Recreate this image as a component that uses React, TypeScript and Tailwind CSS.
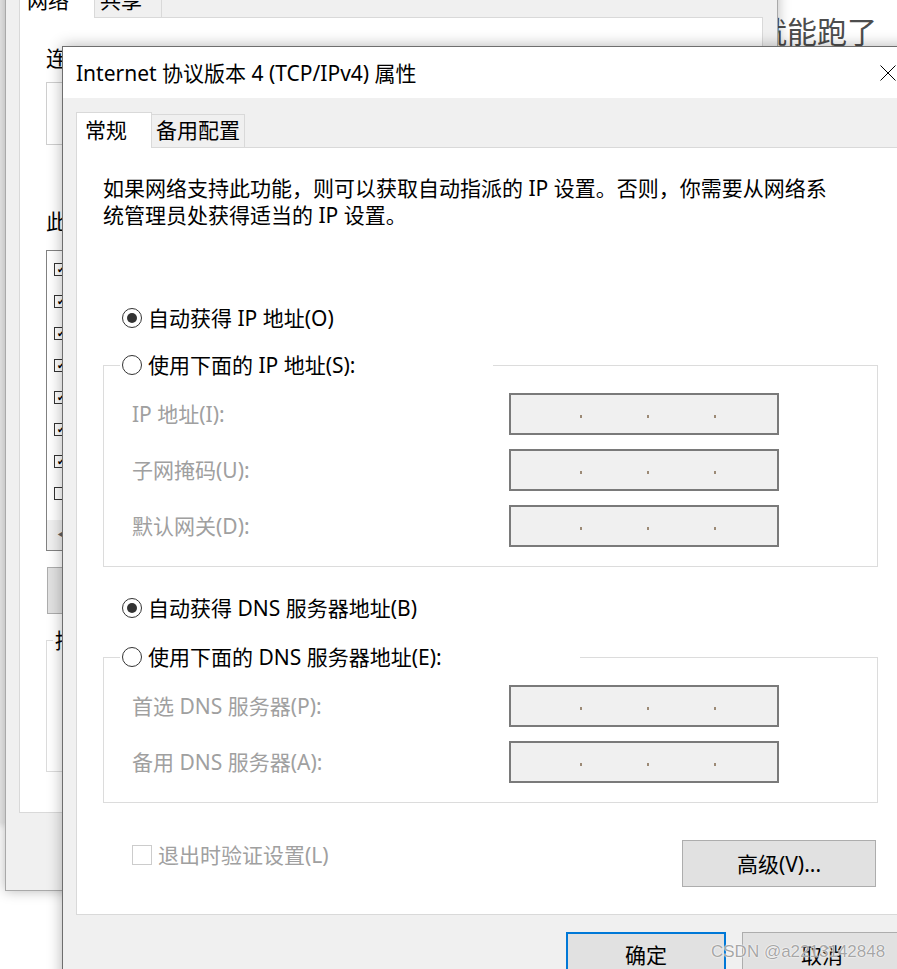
import React from "react";

const ui = "[font-family:'Noto_Sans','Noto_Sans_CJK_SC',sans-serif]";

function Radio({ checked = false }: { checked?: boolean }) {
  return (
    <span className="w-[20px] h-[20px] shrink-0 rounded-full border border-[#333] bg-white flex items-center justify-center">
      {checked && <span className="w-[10px] h-[10px] rounded-full bg-[#333]" />}
    </span>
  );
}

function IpBox() {
  return (
    <div className="w-[270px] h-[42px] border-2 border-[#7a7a7a] bg-[#f0f0f0] flex items-center pl-[69px] gap-[65px]">
      <span className="w-[2px] h-[3px] mt-[4px] bg-[#9c8a76]" />
      <span className="w-[2px] h-[3px] mt-[4px] bg-[#9c8a76]" />
      <span className="w-[2px] h-[3px] mt-[4px] bg-[#9c8a76]" />
    </div>
  );
}

function GroupBox({ title, width, mt, rows }: { title: string; width: string; mt: string; rows: string[] }) {
  return (
    <fieldset className={`border border-[#dcdcdc] pl-[16px] pt-[14px] pb-[19px] ${mt}`}>
      <legend className={`${width} h-[28px] p-0`}>
        <div className="flex items-center h-[28px] pl-[2px] gap-[6px] bg-white">
          <Radio />
          <span className="whitespace-nowrap">{title}</span>
        </div>
      </legend>
      <div className="grid grid-cols-[377px_270px] gap-y-[14px] items-center ml-[12px]">
        {rows.map((r) => (
          <React.Fragment key={r}>
            <span className="text-[#a0a0a0] whitespace-nowrap">{r}</span>
            <IpBox />
          </React.Fragment>
        ))}
      </div>
    </fieldset>
  );
}

function BackWindow() {
  const items = [
    "Microsoft 网络客户端",
    "VMware Bridge Protocol",
    "Microsoft 网络的文件和打印机共享",
    "Npcap Packet Driver (NPCAP)",
    "QoS 数据包计划程序",
    "Internet 协议版本 4 (TCP/IPv4)",
    "Microsoft 网络适配器多路传送器协议",
    "Microsoft LLDP 协议驱动程序",
  ];
  return (
    <div className="absolute left-[5px] top-[-40px] w-[773px] h-[931px] bg-[#f0f0f0] border border-[#a9a9a9] shadow-[0_0_12px_rgba(0,0,0,0.28)] px-[13px] pt-[21px] text-[21px] leading-[28px]">
      {/* tabs */}
      <div className="flex items-end h-[35px]">
        <div className="w-[76px] h-[36px] -mb-px relative z-10 bg-white border border-b-0 border-[#d9d9d9] pl-[7px] pt-[3px]">网络</div>
        <div className="w-[68px] h-[33px] -ml-px border border-b-0 border-[#d9d9d9] pl-[5px] pt-[1px]">共享</div>
      </div>
      <div className="h-[796px] w-[744px] bg-white border border-[#d9d9d9] pl-[26px] pr-[26px] pt-[26px]">
        <div>连接时使用:</div>
        <div className="mt-[10px] h-[63px] border border-[#cfcfcf] bg-white" />
        <div className="mt-[62px]">此连接使用下列项目(O):</div>
        <div className="mt-[15px] h-[301px] border border-[#828282] flex flex-col">
          <div className="flex-1 pt-[11px] pl-[7px]">
            {items.map((it, i) => (
              <div key={it} className="h-[32px] flex items-start gap-[8px]">
                <span className="w-[13px] h-[13px] mt-[1px] border border-[#333] bg-white text-[10px] leading-[11px] text-center">
                  {i < 7 ? "✔" : ""}
                </span>
                <span className="text-[18px] leading-[16px]">{it}</span>
              </div>
            ))}
          </div>
          <div className="h-[30px] bg-[#f0f0f0] flex items-center pl-[10px] text-[#606060] text-[12px]">◀</div>
        </div>
        <div className="mt-[16px] ml-px w-[150px] h-[47px] bg-[#e1e1e1] border border-[#adadad] flex items-center justify-center">安装(N)...</div>
        <fieldset className="mt-[12px] h-[146px] border border-[#dcdcdc] pl-[6px]">
          <legend className="px-[2px]">描述</legend>
        </fieldset>
      </div>
    </div>
  );
}

export default function App() {
  return (
    <div className={`relative w-[897px] h-[969px] overflow-hidden bg-white ${ui}`}>
      {/* blog page behind the windows */}
      <div className="absolute left-[757px] top-[16px] text-[30px] leading-[32px] text-[#4d4d4d] whitespace-nowrap">就能跑了</div>
      <div className="absolute left-0 top-0 w-[5px] h-[823px] bg-[#ebebeb] shadow-[0_2px_6px_rgba(0,0,0,0.2)]" />

      <BackWindow />

      {/* TCP/IPv4 properties dialog */}
      <div className="absolute left-[62px] top-[46px] w-[856px] h-[940px] border-l border-t border-[#6e6e6e] bg-[#f0f0f0] shadow-[0_0_14px_rgba(0,0,0,0.3)] text-[21px] leading-[28px] text-black">
        <div className="h-[51px] bg-white flex items-center justify-between pl-[13px] pr-[22px]">
          <span className="whitespace-nowrap">Internet 协议版本 4 (TCP/IPv4) 属性</span>
          <svg width="16" height="16" viewBox="0 0 16 16">
            <path d="M0.5 0.5 L15.5 15.5 M15.5 0.5 L0.5 15.5" stroke="#000" strokeWidth="1" fill="none" />
          </svg>
        </div>

        <div className="px-[13px] pt-[14px]">
          <div className="flex items-end h-[35px]">
            <div className="w-[76px] h-[36px] -mb-px relative z-10 bg-white border border-b-0 border-[#d9d9d9] pl-[8px] pt-[3px]">常规</div>
            <div className="w-[94px] h-[33px] -ml-px border border-b-0 border-[#d9d9d9] pl-[4px] pt-px">备用配置</div>
          </div>

          <div className="h-[768px] w-[829px] bg-white border border-[#d9d9d9] px-[26px] pt-[27px]">
            <div className="leading-[27px] whitespace-nowrap">
              <div>如果网络支持此功能，则可以获取自动指派的 IP 设置。否则，你需要从网络系</div>
              <div>统管理员处获得适当的 IP 设置。</div>
            </div>

            <div className="mt-[75px] flex items-center h-[28px] pl-[19px] gap-[6px]">
              <Radio checked />
              <span>自动获得 IP 地址(O)</span>
            </div>
            <GroupBox
              title="使用下面的 IP 地址(S):"
              width="w-[373px]"
              mt="mt-[19px]"
              rows={["IP 地址(I):", "子网掩码(U):", "默认网关(D):"]}
            />

            <div className="mt-[27px] flex items-center h-[28px] pl-[19px] gap-[6px]">
              <Radio checked />
              <span>自动获得 DNS 服务器地址(B)</span>
            </div>
            <GroupBox
              title="使用下面的 DNS 服务器地址(E):"
              width="w-[460px]"
              mt="mt-[21px]"
              rows={["首选 DNS 服务器(P):", "备用 DNS 服务器(A):"]}
            />

            <div className="mt-[37px] flex justify-between items-start pl-[29px] pr-[2px]">
              <div className="mt-px flex items-center h-[28px] gap-[6px] text-[#a0a0a0]">
                <span className="w-[20px] h-[20px] border border-[#cccccc] bg-white" />
                <span>退出时验证设置(L)</span>
              </div>
              <div className="w-[194px] h-[47px] bg-[#e1e1e1] border border-[#adadad] flex items-center justify-center">高级(V)...</div>
            </div>
          </div>

          <div className="mt-[17px] flex justify-end gap-[16px] pr-[3px]">
            <div className="w-[160px] h-[46px] bg-[#e1e1e1] border-2 border-[#0078d7] flex items-center justify-center">确定</div>
            <div className="w-[160px] h-[46px] bg-[#e1e1e1] border border-[#adadad] flex items-center justify-center">取消</div>
          </div>
        </div>
      </div>

      {/* blog watermark */}
      <div className="absolute left-[711px] top-[940px] text-[17px] leading-[24px] text-[rgba(150,150,150,0.85)] [font-family:'Liberation_Sans',sans-serif] [text-shadow:0_0_2px_#fff,0_0_1px_#fff] whitespace-nowrap">
        CSDN @a2213142848
      </div>
    </div>
  );
}
